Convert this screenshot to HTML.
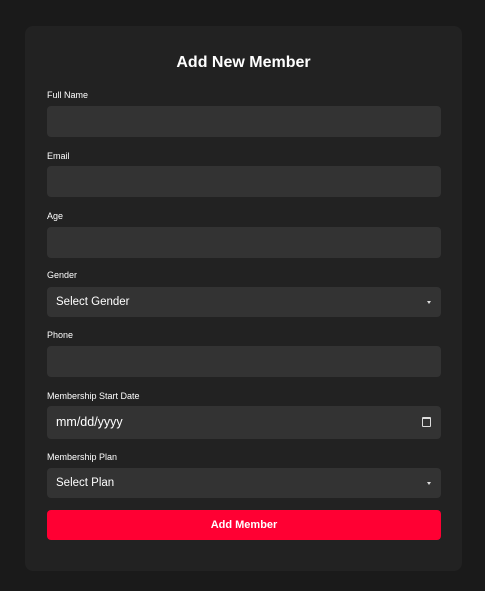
<!DOCTYPE html>
<html><head><style>
body{margin:0;background:#1a1a1a;width:485px;height:591px;position:relative;font-family:"Liberation Sans",sans-serif;overflow:hidden}
.card{position:absolute;left:25px;top:26px;width:437px;height:545px;background:#222;border-radius:8px}
h1{position:absolute;left:25px;width:437px;top:54px;margin:0;text-align:center;color:#fff;font-size:16px;font-weight:bold}
.l{position:absolute;left:47px;color:#fff;font-size:9px}
.i{position:absolute;left:47px;width:394px;height:31px;background:#333;border-radius:4px;color:#fff;font-size:11.5px;box-sizing:border-box;padding-left:9px;line-height:31px}
.ar{position:absolute;right:10px;top:14px;width:0;height:0;border-left:2.5px solid transparent;border-right:2.5px solid transparent;border-top:3px solid #ddd}
.cal{position:absolute;right:10px;top:11px;width:7px;height:7px;border:1px solid #ddd;border-top-width:2px;border-radius:1px}
.b{position:absolute;left:47px;top:510px;width:394px;height:30px;background:#ff0033;border-radius:4px;color:#fff;font-weight:bold;font-size:11px;text-align:center;line-height:30px}
</style></head><body>
<div class="card"></div>
<h1>Add New Member</h1>
<div class="l" style="top:90px">Full Name</div><div class="i" style="top:106px"></div>
<div class="l" style="top:151px">Email</div><div class="i" style="top:166px"></div>
<div class="l" style="top:211px">Age</div><div class="i" style="top:227px"></div>
<div class="l" style="top:270px">Gender</div><div class="i" style="top:287px;height:30px;line-height:30px">Select Gender<div class="ar"></div></div>
<div class="l" style="top:330px">Phone</div><div class="i" style="top:346px"></div>
<div class="l" style="top:391px">Membership Start Date</div><div class="i" style="top:406px;height:33px;line-height:33px;font-size:12.5px">mm/dd/yyyy<div class="cal"></div></div>
<div class="l" style="top:452px">Membership Plan</div><div class="i" style="top:468px;height:30px;line-height:30px">Select Plan<div class="ar"></div></div>
<div class="b">Add Member</div>
</body></html>
